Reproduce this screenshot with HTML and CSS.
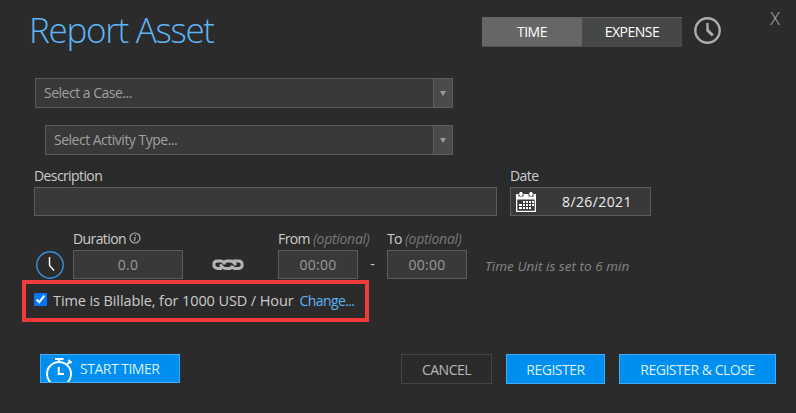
FILE: index.html
```html
<!DOCTYPE html>
<html lang="en">
  <head>
    <meta charset="UTF-8" />
    <meta name="viewport" content="width=device-width, initial-scale=1.0" />
    <title>Report Asset</title>
    <link rel="stylesheet" href="styles.css">
  </head>
  <body>
    <form class="dialog">
      <header class="header">
        <h1>Report Asset</h1>
        <div class="tabs">
          <button type="button" class="tab active">TIME</button>
          <button type="button" class="tab">EXPENSE</button>
        </div>
        <svg class="header-clock" width="28" height="28" viewBox="0 0 28 28">
          <circle cx="13.5" cy="13.5" r="12.2" />
          <path d="M13.5 6V14" />
          <path class="thick" d="M13.3 13L18.8 18.5" />
        </svg>
        <button type="button" class="close">X</button>
      </header>

      <div class="select select-case">
        <span class="select-text">Select a Case...</span>
        <span class="select-arrow"></span>
      </div>
      <div class="select select-activity">
        <span class="select-text">Select Activity Type...</span>
        <span class="select-arrow"></span>
      </div>

      <div class="row">
        <div class="field field-description">
          <label for="description">Description</label>
          <input type="text" id="description" />
        </div>
        <div class="field field-date">
          <label for="date">Date</label>
          <div class="date-box">
            <svg width="20" height="20" viewBox="0 0 20 20">
              <path fill="#fff" fill-rule="evenodd" d="M0 2H2.5V4.5H7.5V2H12.5V4.5H17.5V2H20V20H0ZM1.3 7.5V18.7H18.7V7.5Z" />
              <path fill="#fff" d="M4 0h2l1 2-1 2H4L3 2zM14 0h2l1 2-1 2h-2l-1-2z" />
              <path fill="#fff" d="M7 9h2v2H7zM10 9h2v2h-2zM13 9h2v2h-2zM16 9h2v2h-2zM3 12h3v2H3zM7 12h2v2H7zM10 12h2v2h-2zM13 12h2v2h-2zM16 12h2v2h-2zM3 15h3v2H3zM7 15h2v2H7zM10 15h2v2h-2zM13 15h2v2h-2z" />
            </svg>
            <input type="text" id="date" value="8/26/2021" />
          </div>
        </div>
      </div>

      <div class="row time-row">
        <svg class="time-clock" width="28" height="28" viewBox="0 0 28 28">
          <circle cx="14" cy="14" r="13.2" />
          <path d="M13.5 6V14.5L18 19.5" />
        </svg>
        <div class="field field-duration">
          <label for="duration">Duration
            <svg width="12" height="12" viewBox="0 0 12 12">
              <circle cx="6" cy="6" r="5" />
              <path d="M6.7 2.6L6.4 3.9M6.1 4.9L5.4 9.2" />
            </svg>
          </label>
          <input type="text" id="duration" value="0.0" />
        </div>
        <svg class="link" width="32" height="12" viewBox="0 0 32 12">
          <path d="M12 4.2Q11 2 8.5 2H5.5Q1.8 2 1.8 5.6T5.5 9.5H10M8 5.5L11 8.5Q12 9.5 14 9.5H17Q20 9.5 20 6.5M12 5.5Q12 2 15 2H18Q20 2 21 3L24 6M21 2H26.5Q30.2 2 30.2 5.7T26.5 9.5H23.5Q21 9.5 20 7.5" />
        </svg>
        <div class="field field-from">
          <label for="from">From <em>(optional)</em></label>
          <input type="text" id="from" value="00:00" />
        </div>
        <span class="dash">-</span>
        <div class="field field-to">
          <label for="to">To <em>(optional)</em></label>
          <input type="text" id="to" value="00:00" />
        </div>
        <span class="unit-note">Time Unit is set to 6 min</span>
      </div>

      <div class="billable">
        <input type="checkbox" id="billable" checked />
        <label for="billable">Time is Billable, for 1000 USD / Hour</label>
        <a href="#">Change...</a>
      </div>

      <footer class="actions">
        <button type="button" class="btn btn-timer">
          <svg width="30" height="25" viewBox="0 0 30 25">
            <circle cx="15" cy="17" r="12" />
            <path d="M15 5V2M11 2H19.5M23.5 7L26.5 4M24.5 3L27.5 6" />
            <path d="M14.7 10V17H20" />
          </svg>
          <span>START TIMER</span>
        </button>
        <button type="button" class="btn btn-cancel">CANCEL</button>
        <button type="button" class="btn btn-register">REGISTER</button>
        <button type="button" class="btn btn-register-close">REGISTER &amp; CLOSE</button>
      </footer>
    </form>
  </body>
</html>
```

FILE: styles.css
```css
* {
  margin: 0;
  padding: 0;
  box-sizing: border-box;
}
body {
  font-family: "Open Sans", "Noto Sans", sans-serif;
  font-size: 14px;
  color: #ccc;
  background-color: #2b2b2b;
}
button,
input {
  font: inherit;
  color: inherit;
}
svg {
  display: block;
  flex: none;
  fill: none;
}
.dialog {
  width: 796px;
  height: 413px;
  overflow: hidden;
}
.header {
  display: flex;
  align-items: flex-start;
  height: 78px;
  padding-left: 29px;
}
h1 {
  width: 453px;
  margin-top: 6px;
  font-size: 35px;
  font-weight: 300;
  line-height: 48px;
  letter-spacing: -1.3px;
  color: #5eb5f7;
}
.tabs {
  display: flex;
  width: 200px;
  height: 30px;
  margin-top: 17px;
  border-top: 1px solid #606262;
}
.tab {
  width: 100px;
  padding-bottom: 2px;
  border: none;
  background-color: #464847;
  color: #fff;
  letter-spacing: -0.5px;
}
.tab.active {
  padding-bottom: 1px;
  background-color: #666;
  border-bottom: 1px solid #505050;
}
.header-clock {
  margin: 17px 0 0 12px;
  stroke: #adadad;
  stroke-width: 2.4;
}
.header-clock .thick {
  stroke-width: 3;
}
.close {
  width: 14px;
  margin: 6px 0 0 46px;
  border: none;
  background: none;
  color: #aaa;
  font-size: 18px;
  font-weight: 300;
}
.select {
  display: flex;
  height: 30px;
  border: 1px solid #5c5c5c;
  background-color: #393939;
  color: #a0a0a0;
  line-height: 28px;
}
.select-case {
  width: 418px;
  margin-left: 35px;
}
.select-activity {
  width: 408px;
  margin: 17px 0 0 45px;
}
.select-text {
  flex: 1;
  padding-left: 8px;
  letter-spacing: -0.5px;
}
.select-arrow {
  display: flex;
  align-items: center;
  justify-content: center;
  width: 19px;
  padding-right: 1px;
  border-left: 1px solid #5c5c5c;
  background-color: #4b4b4b;
}
.select-arrow::before {
  content: "";
  border: 3px solid transparent;
  border-top: 5px solid #999;
  border-bottom: none;
}
.row {
  display: flex;
  align-items: flex-end;
  height: 61px;
  padding-left: 34px;
}
.field label {
  display: flex;
  height: 21px;
  line-height: 20px;
  letter-spacing: -0.6px;
  white-space: nowrap;
}
.field input,
.date-box {
  display: block;
  width: 100%;
  height: 29px;
  border: 1px solid #5c5c5c;
  background-color: #393939;
}
.field-description {
  width: 463px;
}
.field-date {
  width: 141px;
  margin-left: 13px;
}
.date-box {
  display: flex;
  align-items: center;
  padding-left: 5px;
}
.date-box input {
  width: 114px;
  height: 27px;
  padding-left: 26px;
  border: none;
  background: none;
  color: #eee;
  letter-spacing: 0.4px;
}
.time-row {
  height: 63px;
  padding-left: 36px;
}
.time-clock {
  stroke: #fff;
  stroke-width: 1.4;
}
.time-clock circle {
  stroke: #3a8fdd;
}
.field-duration {
  width: 110px;
  margin-left: 9px;
}
.field-duration svg {
  margin: 3px 0 0 3px;
  stroke: #aaa;
  stroke-width: 1.2;
}
.link {
  margin: 0 34px 8px 29px;
  stroke: #b5b5b5;
  stroke-width: 2.9;
}
.field-from,
.field-to {
  width: 80px;
}
.time-row input {
  color: #999;
  letter-spacing: 0.3px;
  text-align: center;
}
.field em {
  margin-left: 3px;
  color: #777;
  letter-spacing: -0.3px;
}
.dash {
  width: 29px;
  height: 29px;
  line-height: 28px;
  text-align: center;
}
.unit-note {
  height: 29px;
  margin-left: 18px;
  color: #858585;
  font-size: 13.5px;
  font-style: italic;
  letter-spacing: 0.05px;
  line-height: 32px;
}
.billable {
  display: flex;
  align-items: center;
  width: 347px;
  height: 42px;
  margin: 1px 0 0 22px;
  padding: 0 0 2px 8px;
  border: 4px solid #f23b3b;
  white-space: nowrap;
}
.billable input {
  width: 13px;
  height: 13px;
  margin-top: -1px;
}
.billable label {
  margin-left: 6px;
  font-size: 14.5px;
  letter-spacing: -0.1px;
}
.billable a {
  margin: 1px 0 0 6px;
  color: #5eb5f7;
  letter-spacing: -0.6px;
  text-decoration: none;
}
.actions {
  display: flex;
  margin: 32px 0 0 40px;
}
.btn {
  height: 30px;
  padding-top: 1px;
  border: 1px solid #41abf5;
  background-color: #008ff0;
  color: #d8f0ff;
  letter-spacing: -0.5px;
  white-space: nowrap;
}
.btn-timer {
  display: flex;
  width: 140px;
  height: 29px;
  padding: 0 0 0 3px;
  line-height: 27px;
}
.btn-timer svg {
  margin-top: 2px;
  stroke: #fff;
  stroke-width: 2;
}
.btn-timer span {
  margin-left: 6px;
}
.btn-cancel {
  width: 91px;
  margin-left: 221px;
  border-color: #444;
  background: none;
  color: #b8b8b8;
}
.btn-register {
  width: 99px;
  margin-left: 14px;
}
.btn-register-close {
  width: 157px;
  margin-left: 14px;
}
```
